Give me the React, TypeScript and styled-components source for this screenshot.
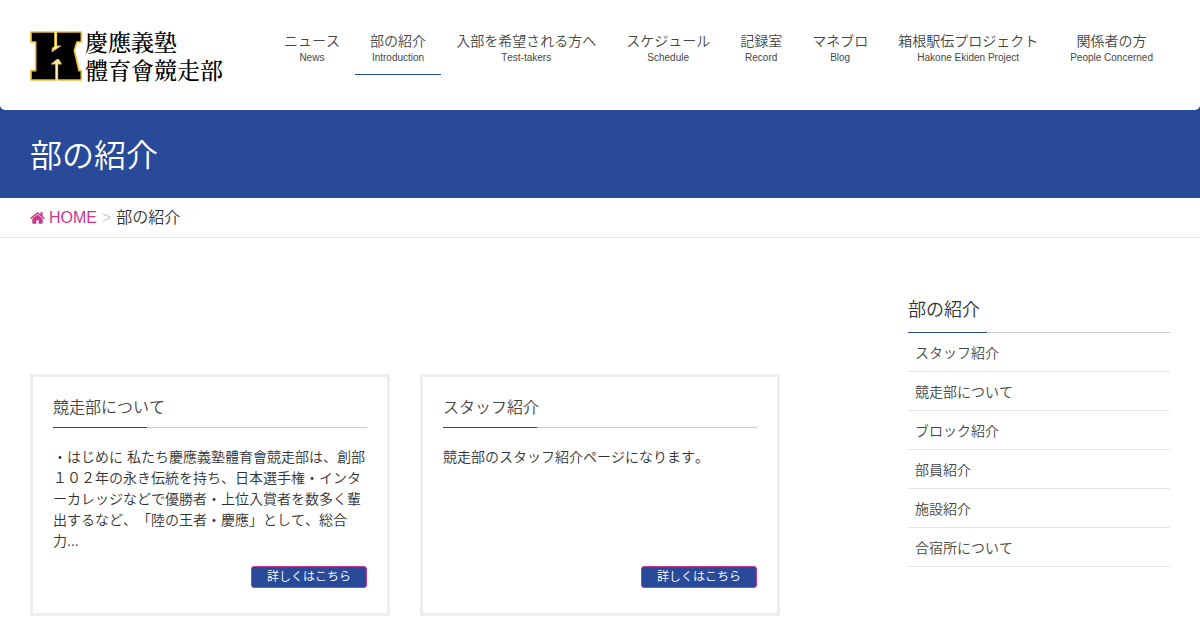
import React from 'react';
import styled, { createGlobalStyle } from 'styled-components';

const blue = '#294a99';
const pink = '#c9388d';

const GlobalStyle = createGlobalStyle`
  * { box-sizing: border-box; }
  body {
    margin: 0;
    background: #fff;
    color: #333;
    font-family: "Liberation Sans", "Noto Sans CJK JP", sans-serif;
    font-size: 14px;
    font-weight: 350;
    font-kerning: none;
    line-height: 21px;
    text-spacing-trim: space-all;
  }
  h1, h2, h3, p, ul, ol { margin: 0; padding: 0; font-weight: inherit; }
  ul, ol { list-style: none; }
  a { color: inherit; text-decoration: none; }
`;

const HeaderBacking = styled.div`
  background: ${blue};
`;

const Header = styled.header`
  display: flex;
  justify-content: space-between;
  align-items: flex-start;
  min-height: 110px;
  padding: 28px 30px 26px;
  background: #fff;
  border-radius: 0 0 5px 5px;
`;

const Logo = styled.a`
  display: flex;
  align-items: center;
  gap: 2px;
  color: #000;
  white-space: nowrap;
`;

const LogoText = styled.span`
  font-family: "Noto Serif CJK JP", "Noto Sans CJK JP", serif;
  font-size: 23px;
  font-weight: 500;
  line-height: 28px;
`;

const NavList = styled.ul`
  display: flex;
`;

const NavLink = styled.a<{ $current?: boolean }>`
  display: flex;
  flex-direction: column;
  align-items: center;
  padding: 3px 15px 9px;
  border-bottom: 1px solid ${(p) => (p.$current ? blue : 'transparent')};
  color: #464646;
  white-space: nowrap;
`;

const NavLabel = styled.span`
  line-height: 20px;
`;

const NavSub = styled.span`
  padding: 0 2px;
  font-size: 10px;
  line-height: 14px;
`;

const TitleBand = styled.div`
  padding: 24px 30px 20px;
  background: ${blue};
  color: #fff;
`;

const PageTitle = styled.h1`
  font-size: 32px;
  line-height: 44px;
`;

const Breadcrumb = styled.nav`
  padding: 8px 30px 7px;
  border-bottom: 1px solid #e5e5e5;
  font-size: 16px;
  line-height: 24px;
`;

const Crumbs = styled.ol`
  display: flex;
  gap: 5px;
`;

const HomeLink = styled.a`
  display: flex;
  align-items: center;
  gap: 4px;
  color: ${pink};
`;

const Separator = styled.span`
  color: #ccc;
`;

const Content = styled.div`
  display: grid;
  grid-template-columns: minmax(0, 1fr) 262px;
  gap: 128px;
  padding: 60px 30px 14px;
`;

const Cards = styled.main`
  display: grid;
  grid-template-columns: 1fr 1fr;
  align-items: stretch;
  align-self: start;
  gap: 30px;
  padding-top: 76px;
`;

const Card = styled.article`
  display: flex;
  flex-direction: column;
  padding: 20px 20px 25px;
  border: 3px solid #eee;
`;

const ruled = `linear-gradient(to right, ${blue} 30%, #ccc 30%) bottom / 100% 1px no-repeat`;

const CardTitle = styled.h3`
  margin-bottom: 19px;
  padding-bottom: 9px;
  background: ${ruled};
  color: #464646;
  font-size: 16px;
  line-height: 22px;
`;

const CardText = styled.p`
  flex: 1;
`;

const MoreLink = styled.a`
  align-self: flex-end;
  margin-top: 14px;
  padding: 0 15px;
  border: 1px solid ${pink};
  border-radius: 3px;
  background: ${blue};
  color: #fff;
  font-size: 12px;
  line-height: 20px;
`;

const SideTitle = styled.h2`
  padding: 1px 0 12px;
  background: ${ruled};
  font-size: 18px;
  line-height: 22px;
`;

const SideLink = styled.a`
  display: block;
  padding: 10px 7px 7px;
  border-bottom: 1px solid #e5e5e5;
  color: #464646;
`;

const navItems = [
  { label: 'ニュース', sub: 'News' },
  { label: '部の紹介', sub: 'Introduction', current: true },
  { label: '入部を希望される方へ', sub: 'Test-takers' },
  { label: 'スケジュール', sub: 'Schedule' },
  { label: '記録室', sub: 'Record' },
  { label: 'マネブロ', sub: 'Blog' },
  { label: '箱根駅伝プロジェクト', sub: 'Hakone Ekiden Project' },
  { label: '関係者の方', sub: 'People Concerned' },
];

const cards = [
  {
    title: '競走部について',
    text: '・はじめに 私たち慶應義塾體育會競走部は、創部１０２年の永き伝統を持ち、日本選手権・インターカレッジなどで優勝者・上位入賞者を数多く輩出するなど、「陸の王者・慶應」として、総合力...',
  },
  { title: 'スタッフ紹介', text: '競走部のスタッフ紹介ページになります。' },
];

const sideItems = ['スタッフ紹介', '競走部について', 'ブロック紹介', '部員紹介', '施設紹介', '合宿所について'];

const KMark = () => (
  <svg width="53" height="50" viewBox="0 0 159 150" fill="none" aria-hidden="true">
    <path
      d="M3 3H154V33H141L133 58L147 119H154V147H3V119H17V33H3Z"
      fill="#000"
      stroke="#edbd35"
      strokeWidth="5"
      strokeLinejoin="round"
    />
    <path d="M77 3V50M80 96V147" stroke="#edbd35" strokeWidth="9" />
    <path
      d="M67 51L77 45H92L66 62ZM64 99L80 86L86 85L94 99Z"
      fill="#fae9b0"
      stroke="#edbd35"
      strokeWidth="3"
      strokeLinejoin="round"
    />
    <path d="M77 1V50M80 96V149" stroke="#fff3cf" strokeWidth="4" />
  </svg>
);

const HomeIcon = () => (
  <svg width="15" height="16" viewBox="64 0 1664 1792" fill="currentColor" aria-hidden="true">
    <path d="M1472 992v480q0 26-19 45t-45 19h-384v-384h-256v384h-384q-26 0-45-19t-19-45v-480q0-1 .5-3t.5-3l575-474 575 474q1 2 1 6zm223-69l-62 74q-8 9-21 11h-3q-13 0-21-7l-692-577-692 577q-12 8-24 7-13-2-21-11l-62-74q-8-10-7-23.5t11-21.5l719-599q32-26 76-26t76 26l244 204v-195q0-14 9-23t23-9h192q14 0 23 9t9 23v408l219 182q10 8 11 21.5t-7 23.5z" />
  </svg>
);

export default function App() {
  return (
    <>
      <GlobalStyle />
      <HeaderBacking>
        <Header>
          <Logo href="#">
            <KMark />
            <LogoText>
              慶應義塾
              <br />
              體育會競走部
            </LogoText>
          </Logo>
          <nav>
            <NavList>
              {navItems.map((item) => (
                <li key={item.label}>
                  <NavLink href="#" $current={item.current}>
                    <NavLabel>{item.label}</NavLabel>
                    <NavSub>{item.sub}</NavSub>
                  </NavLink>
                </li>
              ))}
            </NavList>
          </nav>
        </Header>
      </HeaderBacking>
      <TitleBand>
        <PageTitle>部の紹介</PageTitle>
      </TitleBand>
      <Breadcrumb>
        <Crumbs>
          <li>
            <HomeLink href="#">
              <HomeIcon />
              HOME
            </HomeLink>
          </li>
          <Separator as="li">&gt;</Separator>
          <li>部の紹介</li>
        </Crumbs>
      </Breadcrumb>
      <Content>
        <Cards>
          {cards.map((card) => (
            <Card key={card.title}>
              <CardTitle>{card.title}</CardTitle>
              <CardText>{card.text}</CardText>
              <MoreLink href="#">詳しくはこちら</MoreLink>
            </Card>
          ))}
        </Cards>
        <aside>
          <SideTitle>部の紹介</SideTitle>
          <ul>
            {sideItems.map((item) => (
              <li key={item}>
                <SideLink href="#">{item}</SideLink>
              </li>
            ))}
          </ul>
        </aside>
      </Content>
    </>
  );
}
